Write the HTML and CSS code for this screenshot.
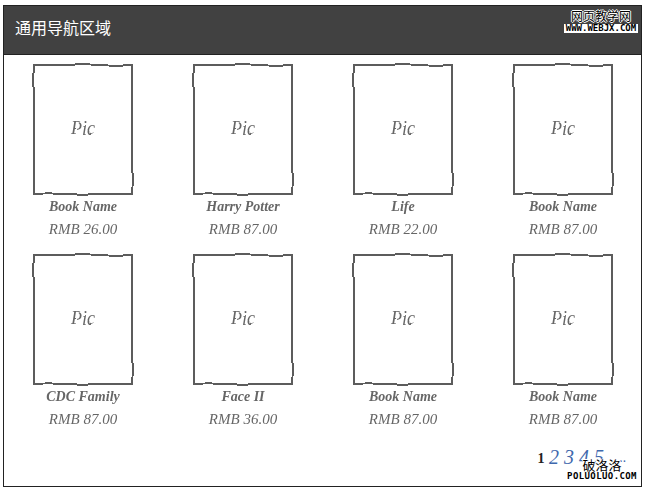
FILE: index.html
```html
<!DOCTYPE html>
<html lang="en">
<head>
    <meta charset="UTF-8">
    <title>通用导航区域</title>
    <link rel="stylesheet" href="styles.css">
</head>
<body>
    <svg class="filters" width="0" height="0">
        <filter id="wobble" x="-5%" y="-5%" width="110%" height="110%" color-interpolation-filters="sRGB">
            <feTurbulence type="fractalNoise" baseFrequency="0.03" numOctaves="1" seed="4"/>
            <feDisplacementMap in="SourceGraphic" scale="3" xChannelSelector="R" yChannelSelector="G"/>
            <feGaussianBlur stdDeviation="0.4"/>
        </filter>
        <filter id="wobble-text" x="-5%" y="-5%" width="110%" height="110%" color-interpolation-filters="sRGB">
            <feTurbulence type="fractalNoise" baseFrequency="0.12" numOctaves="1" seed="7"/>
            <feDisplacementMap in="SourceGraphic" scale="1.5" xChannelSelector="R" yChannelSelector="G"/>
            <feGaussianBlur stdDeviation="0.25"/>
        </filter>
    </svg>

    <div class="frame">
        <div class="header">通用导航区域</div>

        <!-- Book list -->
        <div class="books">
            <div class="book"><div class="pic">Pic</div><div class="name">Book Name</div><div class="price">RMB 26.00</div></div>
            <div class="book"><div class="pic">Pic</div><div class="name">Harry Potter</div><div class="price">RMB 87.00</div></div>
            <div class="book"><div class="pic">Pic</div><div class="name">Life</div><div class="price">RMB 22.00</div></div>
            <div class="book"><div class="pic">Pic</div><div class="name">Book Name</div><div class="price">RMB 87.00</div></div>
            <div class="book"><div class="pic">Pic</div><div class="name">CDC Family</div><div class="price">RMB 87.00</div></div>
            <div class="book"><div class="pic">Pic</div><div class="name">Face II</div><div class="price">RMB 36.00</div></div>
            <div class="book"><div class="pic">Pic</div><div class="name">Book Name</div><div class="price">RMB 87.00</div></div>
            <div class="book"><div class="pic">Pic</div><div class="name">Book Name</div><div class="price">RMB 87.00</div></div>
        </div>

        <div class="pager">
            <span class="current">1</span>
            <span>2</span>
            <span>3</span>
            <span>4</span>
            <span>5</span>
            <span class="more">..</span>
        </div>
    </div>

    <!-- Watermarks stamped over the picture -->
    <div class="mark mark-top">
        <div class="mark-cn">网页教学网</div>
        <div class="mark-en">WWW.WEBJX.COM</div>
    </div>
    <div class="mark mark-bottom">
        <div class="mark-cn">破洛洛</div>
        <div class="mark-en">POLUOLUO.COM</div>
    </div>
</body>
</html>
```

FILE: styles.css
```css
* {
    box-sizing: border-box;
    margin: 0;
    padding: 0;
}

body {
    background: #fff;
    color: #666;
    font-family: 'Liberation Serif', serif;
    width: 647px;
    height: 489px;
    overflow: hidden;
    position: relative;
    padding: 5px 5px 0 3px;
}

.filters {
    display: block;
    height: 0;
}

.frame {
    border: 1px solid #222;
    height: 482px;
    width: 639px;
}

.header {
    background: #414141;
    border-bottom: 1px solid #222;
    color: #fff;
    font-family: 'Noto Sans CJK SC', sans-serif;
    font-size: 16px;
    height: 49px;
    line-height: 43px;
    padding-left: 11px;
}

.books {
    display: grid;
    grid-template-columns: repeat(4, 100px);
    column-gap: 60px;
    padding: 9px 0 0 29px;
}

.book {
    height: 190px;
    text-align: center;
}

.pic {
    border: 2px solid #5c5c5c;
    filter: url(#wobble);
    font-size: 18px;
    font-style: italic;
    height: 131px;
    line-height: 125px;
    width: 100px;
}

.name,
.price {
    filter: url(#wobble-text);
    font-style: italic;
    line-height: 18px;
    white-space: nowrap;
}

.name {
    font-size: 14px;
    font-weight: bold;
    margin-top: 3px;
}

.price {
    font-size: 15px;
    margin-top: 4px;
}

.pager {
    color: #3f68ad;
    display: flex;
    font-size: 20px;
    font-style: italic;
    gap: 1px;
    justify-content: flex-end;
    line-height: 22px;
    margin-top: 2px;
    padding-right: 13px;
}

.pager span {
    text-align: center;
    width: 14px;
}

.pager .current {
    color: #222;
    font-size: 14px;
    font-style: normal;
    font-weight: bold;
    line-height: 26px;
    margin-right: 1px;
    width: 8px;
}

.pager .more {
    font-size: 14px;
    line-height: 24px;
    margin-left: 11px;
    width: 10px;
}

.mark {
    position: absolute;
    text-align: center;
    white-space: nowrap;
    color: #000;
}

.mark-cn {
    font-family: 'Noto Sans CJK SC', sans-serif;
    line-height: 15px;
    text-shadow: 1px 0 #fff, -1px 0 #fff, 0 1px #fff, 0 -1px #fff;
}

.mark-en {
    background: #fff;
    font-family: 'DejaVu Sans Mono', monospace;
    font-size: 9px;
    font-weight: bold;
    line-height: 9px;
}

.mark-top {
    left: 564px;
    top: 8px;
    width: 74px;
}

.mark-top .mark-cn {
    font-size: 12px;
}

.mark-top .mark-en {
    margin-top: 1px;
}

.mark-bottom {
    left: 567px;
    top: 457px;
    width: 70px;
}

.mark-bottom .mark-cn {
    font-size: 13px;
}

.mark-bottom .mark-en {
    letter-spacing: 0.4px;
}
```
